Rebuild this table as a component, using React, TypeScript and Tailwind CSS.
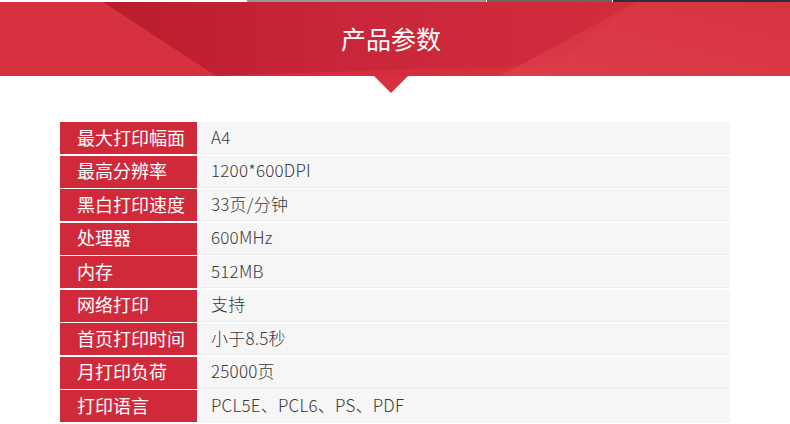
import React from 'react';

const specs = [
  { label: '最大打印幅面', value: 'A4' },
  { label: '最高分辨率', value: '1200*600DPI' },
  { label: '黑白打印速度', value: '33页/分钟' },
  { label: '处理器', value: '600MHz' },
  { label: '内存', value: '512MB' },
  { label: '网络打印', value: '支持' },
  { label: '首页打印时间', value: '小于8.5秒' },
  { label: '月打印负荷', value: '25000页' },
  { label: '打印语言', value: 'PCL5E、PCL6、PS、PDF' },
];

const font = { fontFamily: '"Noto Sans CJK SC", "Noto Sans", sans-serif' };

const BannerBg = () => (
  <svg className="absolute inset-0 h-full w-full" viewBox="0 0 790 74" preserveAspectRatio="none">
    <defs>
      <linearGradient id="dark" x1="0" y1="0" x2="1" y2="0">
        <stop offset="0" stopColor="#b91d2b" />
        <stop offset="0.45" stopColor="#c8263a" />
        <stop offset="1" stopColor="#d22d3d" />
      </linearGradient>
      <linearGradient id="light" x1="0" y1="1" x2="1" y2="0">
        <stop offset="0" stopColor="#de4653" />
        <stop offset="1" stopColor="#d8333f" />
      </linearGradient>
    </defs>
    <rect width="790" height="74" fill="#d7313f" />
    <polygon points="103,0 637,0 556,62 216,74" fill="url(#dark)" />
    <polygon points="556,62 216,74 420,74" fill="#d22c3c" opacity="0.6" />
    <polygon points="500,74 637,0 790,0 790,74" fill="url(#light)" opacity="0.6" />
  </svg>
);

export default function App() {
  return (
    <div className="w-[790px] h-[424px] overflow-hidden bg-white" style={font}>
      <div className="flex h-[2px]">
        <div className="w-[247px] bg-white" />
        <div className="w-[239px] bg-[#9a9797]" />
        <div className="w-[1px] bg-white" />
        <div className="w-[125px] bg-[#6e655c]" />
        <div className="w-[1px] bg-white" />
        <div className="flex-1 bg-[#2b2f3f]" />
      </div>

      <div className="relative h-[74px] flex items-center justify-center">
        <BannerBg />
        <h2 className="relative text-[25px] leading-none text-white -mt-[1px] pr-[8px]">产品参数</h2>
        <div className="absolute left-[374px] top-[74px] w-0 h-0 border-l-[17px] border-r-[17px] border-t-[17px] border-l-transparent border-r-transparent border-t-[#d7313f]" />
      </div>

      <div className="mt-[46px] ml-[60px] w-[670px] flex flex-col gap-[1.5px] bg-white">
        {specs.map((s) => (
          <div key={s.label} className="flex h-[32px]">
            <div className="w-[137px] bg-[#d02a3a] text-white text-[18px] leading-none flex items-center pl-[17px] pb-[3px]">
              {s.label}
            </div>
            <div className="flex-1 bg-[#f6f6f6] border-b border-[#ececec] text-[#3a3a3a] text-[17px] font-light tracking-[0.2px] leading-none flex items-center pl-[14px] pb-[3px]">
              {s.value}
            </div>
          </div>
        ))}
      </div>
    </div>
  );
}
